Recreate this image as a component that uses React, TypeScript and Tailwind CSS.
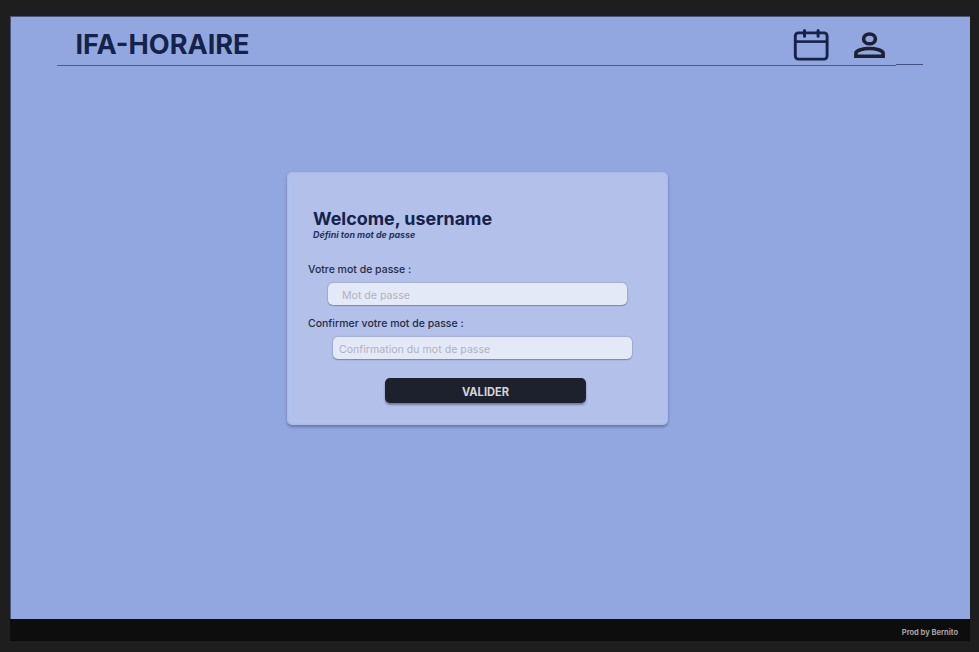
import React from "react";

function CalendarIcon() {
  return (
    <svg className="block h-[33px] w-[36px]" viewBox="0 0 36 33" fill="none" stroke="#15224a">
      <rect x="2.3" y="3.9" width="31.8" height="26.2" rx="3" strokeWidth="2.9" />
      <path d="M2.300 12.600H34" strokeWidth="2.6" />
      <path d="M11.500 1.600V7.200M25.100 1.600V7.200" strokeWidth="3" strokeLinecap="round" />
    </svg>
  );
}

function PersonIcon() {
  return (
    <svg className="block h-[26px] w-[31px]" viewBox="0 0 31 26" fill="none" stroke="#1c2233" strokeWidth="3.6">
      <ellipse cx="15.500" cy="6.900" rx="5.900" ry="4.900" />
      <path d="M1.900 24.200V21.200C1.900 18.200 9.500 16.500 15.500 16.500S29.100 18.200 29.100 21.200V24.200Z" />
    </svg>
  );
}

function Header() {
  return (
    <header className="ml-[46px] h-[50px] w-[867px]">
      <div className="flex h-[48px] items-start pl-[19px]">
        <h1 className="mt-[12px] w-[176px] whitespace-nowrap text-[27.1px] leading-[34px] font-bold text-[#15224a]">
          IFA-HORAIRE
        </h1>
        <div className="mt-[13px] ml-[541.5px]">
          <CalendarIcon />
        </div>
        <div className="mt-[16px] ml-[25px]">
          <PersonIcon />
        </div>
      </div>
      <div className="flex items-start">
        <div className="mt-px h-px w-[839px] bg-[#4b5b91]" />
        <div className="h-px w-[27px] bg-[#43517f]" />
      </div>
    </header>
  );
}

export default function App() {
  return (
    <div className="h-[652px] w-[979px] overflow-hidden bg-[#1e1e1e] pt-[16px] pl-[10px] font-['Inter',sans-serif]">
      <div className="flex h-[625px] w-[960px] flex-col">
        <div className="h-[603px] border-t border-l border-[#4b5576] bg-[#92a7e0]">
          <div className="-mt-px -ml-px pl-[0.5px]">
            <Header />
          </div>
          <main className="mt-[106px] ml-[276px] h-[253px] w-[381px] rounded-[5px] bg-[#b2c0ea] pt-[36px] shadow-[0_2px_3px_rgba(50,60,100,0.45),inset_0_0_2px_#98abe1]">
            <h2 className="ml-[26px] text-[17.9px] leading-[22px] font-bold whitespace-nowrap text-[#15224a]">
              Welcome, username
            </h2>
            <p className="-mt-px ml-[26px] text-[8.9px] leading-[12px] font-bold whitespace-nowrap text-[#26325a] italic">
              Défini ton mot de passe
            </p>
            <form>
              <label className="mt-[22px] ml-[21px] block text-[10.5px] leading-[14px] font-medium whitespace-nowrap text-[#252c42]">
                Votre mot de passe :
              </label>
              <div className="mt-[6px] ml-[41px] flex h-[21.5px] w-[299px] items-center rounded-[5px] bg-[#e4e9f7] pt-[2px] pl-[14px] text-[10.6px] leading-[14px] whitespace-nowrap text-[#afb2bf] shadow-[0_1px_1px_rgba(90,95,115,0.5),0_0_1px_1px_rgba(120,125,150,0.25)]">
                <span className="mt-[1.5px]">Mot de passe</span>
              </div>
              <label className="mt-[12.5px] ml-[21px] block text-[10.5px] leading-[14px] font-medium whitespace-nowrap text-[#252c42]">
                Confirmer votre mot de passe :
              </label>
              <div className="mt-[6px] ml-[46px] flex h-[21.5px] w-[299px] items-center rounded-[5px] bg-[#e4e9f7] pt-[2px] pl-[6px] text-[10.6px] leading-[14px] whitespace-nowrap text-[#afb2bf] shadow-[0_1px_1px_rgba(90,95,115,0.5),0_0_1px_1px_rgba(120,125,150,0.25)]">
                <span className="mt-[1.5px]">Confirmation du mot de passe</span>
              </div>
              <button
                type="button"
                className="mt-[19.5px] ml-[98px] block h-[25px] w-[201px] rounded-[5px] bg-[#1d212e] pt-[2px] text-[11.1px] leading-[14px] font-bold text-[#d5d6d9] shadow-[0_2px_2px_rgba(40,45,65,0.45)]"
              >
                VALIDER
              </button>
            </form>
          </main>
        </div>
        <footer className="flex h-[22px] items-center justify-end bg-[#0d0d0d] pt-[6px] pr-[12px] text-[7.5px] leading-[10px] font-bold text-[#a3a3a3]">
          Prod by Bernito
        </footer>
      </div>
    </div>
  );
}
